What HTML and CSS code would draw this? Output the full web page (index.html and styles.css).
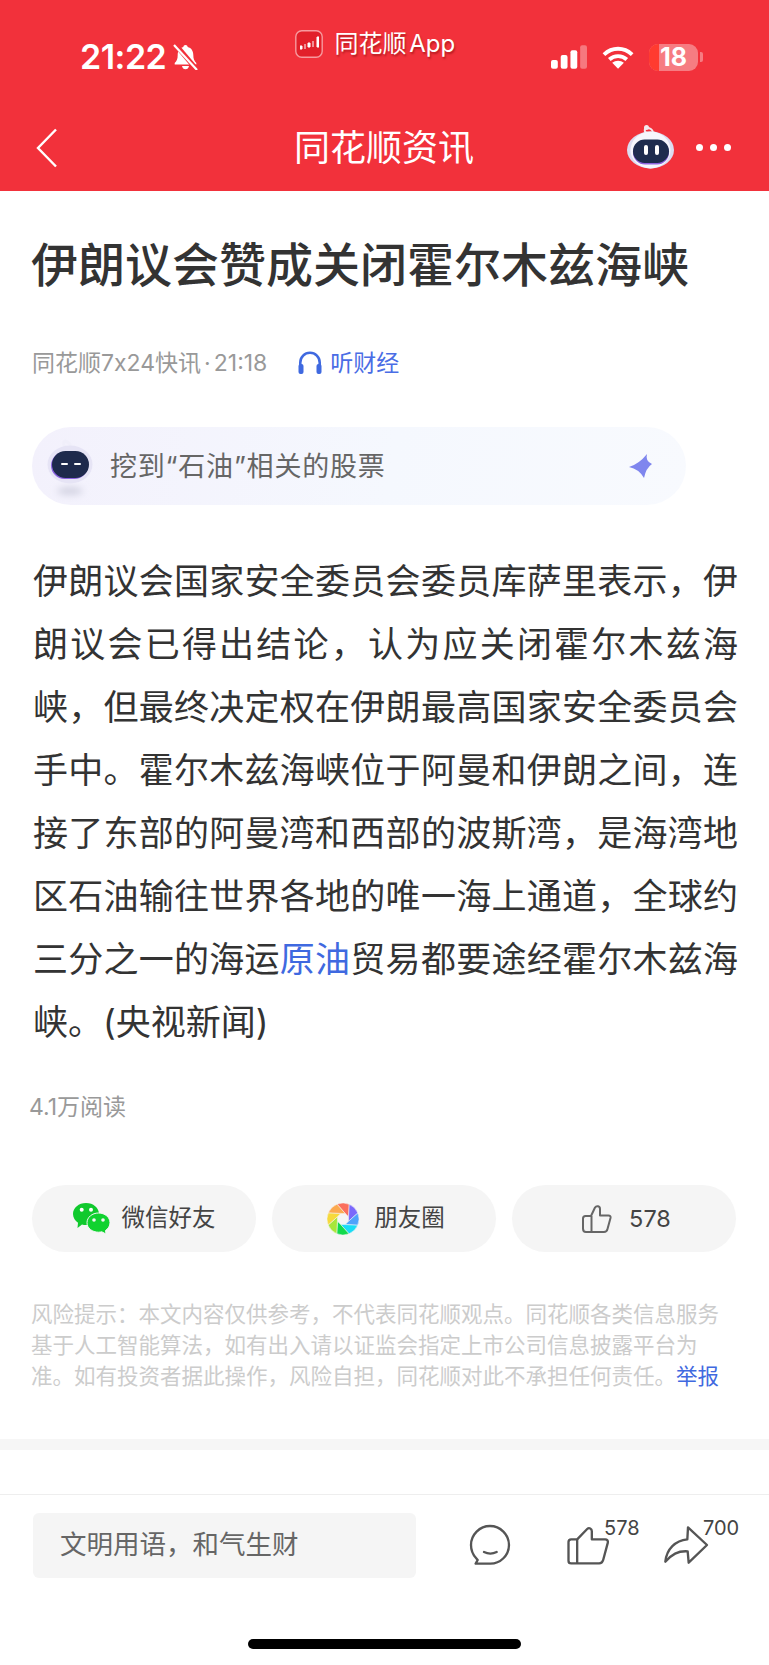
FILE: index.html
```html
<!DOCTYPE html>
<html lang="zh-CN">

<head>
    <meta charset="UTF-8">
    <meta name="viewport" content="width=device-width, initial-scale=1.0">
    <title>同花顺资讯</title>
    <link rel="stylesheet" href="styles.css">
</head>

<body>
    <header class="top">
        <!-- status bar -->
        <div class="status">
            <div class="status-left">
                <span class="clock">21:22</span>
                <svg class="bell" width="25" height="26" viewBox="0 0 25 26">
                    <path fill="#fff" d="M12.5 1c1.3 0 2 .8 2.2 2 3.6.9 5.6 4 5.6 8 0 4 1 6 3 8v1.500H1.700V19c2-2 3-4 3-8 0-4 2-7.100 5.600-8 .2-1.200.9-2 2.200-2zM9 22h7c-.3 2-1.700 3.300-3.500 3.300S9.300 24 9 22z"/>
                    <path stroke="#f2313b" stroke-width="5" d="M2 0l22 26"/>
                    <path stroke="#fff" stroke-width="2.200" d="M1 1l23 25"/>
                </svg>
            </div>
            <div class="status-app">
                <svg class="app-logo" width="28" height="28" viewBox="0 0 28 28">
                    <rect x=".8" y=".8" width="26.400" height="26.400" rx="6" fill="#e2202a" stroke="#f79a9e" stroke-width="1.400"/>
                    <path stroke="#fff" stroke-width="1" d="M6 15v5M10 14v5M14 12v6M18 11v6M23 6v12"/>
                    <path fill="#fff" d="M5 16h2.500v3H5zM12.500 13h3v4h-3zM21.500 7h2.500v10h-2.500z"/>
                </svg>
                <span>同花顺 App</span>
            </div>
            <div class="status-right">
                <svg width="37" height="24" viewBox="0 0 37 24">
                    <rect x="0" y="15" width="7" height="9" rx="2" fill="#fff"/>
                    <rect x="10" y="10" width="7" height="14" rx="2" fill="#fff"/>
                    <rect x="20" y="5" width="7" height="19" rx="2" fill="#fff"/>
                    <rect x="30" y="0" width="7" height="24" rx="2" fill="#fff" opacity=".35"/>
                </svg>
                <svg width="33" height="24" viewBox="0 0 33 24">
                    <path fill="none" stroke="#fff" stroke-width="4" d="M2 9.500c8.500-8 20.500-8 29 0M7.500 14.500c5-4.500 13-4.500 18 0"/>
                    <path fill="#fff" d="M16.500 24l-6-6c3.500-3 8.500-3 12 0z"/>
                </svg>
                <div class="battery"><span class="battery-low"></span><span class="battery-num">18</span></div>
            </div>
        </div>
        <!-- nav -->
        <nav class="nav">
            <svg class="nav-back" width="22" height="40" viewBox="0 0 22 40">
                <path fill="none" stroke="#fff" stroke-width="2.400" d="M20 1.500L2 20l18 18.500"/>
            </svg>
            <h2 class="nav-title">同花顺资讯</h2>
            <svg class="nav-robot" width="47" height="44" viewBox="0 0 47 44">
                <path fill="none" stroke="#f4e9ee" stroke-width="2" d="M20 8c-3-1-3-5 0-5 3 0 5 1 6 4"/>
                <circle cx="19.500" cy="2.500" r="2.500" fill="#f4e9ee"/>
                <ellipse cx="23.500" cy="25" rx="23.500" ry="18.500" fill="#dcdcf0"/>
                <ellipse cx="23.500" cy="25" rx="20" ry="18.500" fill="#f6f6fc"/>
                <rect x="6" y="15.500" width="36" height="24" rx="12" fill="#8d63dc"/>
                <rect x="6" y="14.500" width="36" height="23.500" rx="11.700" fill="#1e2c4e"/>
                <rect x="17" y="20" width="4" height="10" rx="2" fill="#fff"/>
                <rect x="28" y="20" width="4" height="10" rx="2" fill="#fff"/>
            </svg>
            <div class="nav-dots"><i></i><i></i><i></i></div>
        </nav>
    </header>

    <main class="article">
        <h1 class="headline">伊朗议会赞成关闭霍尔木兹海峡</h1>

        <div class="meta">
            <span>同花顺7x24快讯<span class="dot">·</span>21:18</span>
            <a class="listen">
                <svg width="24" height="24" viewBox="0 0 24 24">
                    <path fill="none" stroke="#3f69e0" stroke-width="2.600" d="M2.300 17v-5.500a9.700 9.700 0 0 1 19.400 0V17"/>
                    <rect x="0.500" y="13" width="5" height="10" rx="2" fill="#3f69e0"/>
                    <rect x="18.500" y="13" width="5" height="10" rx="2" fill="#3f69e0"/>
                </svg>
                听财经
            </a>
        </div>

        <div class="ask">
            <svg class="ask-robot" width="46" height="66" viewBox="0 0 46 66">
                <defs>
                    <filter id="soft" x="-50%" y="-150%" width="200%" height="400%"><feGaussianBlur stdDeviation="3.500"/></filter>
                </defs>
                <ellipse cx="23" cy="55" rx="13" ry="4" fill="#d3d3e2" filter="url(#soft)"/>
                <path fill="none" stroke="#f0effa" stroke-width="3" d="M19 12c-3-2-3-6-1-7 3 1 5 3 6 6"/>
                <ellipse cx="23" cy="28.500" rx="22.500" ry="19" fill="#e6e4f5"/>
                <rect x="4" y="16" width="37" height="27" rx="13.500" fill="#8a62df"/>
                <rect x="5" y="15" width="37" height="27" rx="13.500" fill="#1e2a4c"/>
                <rect x="14" y="27" width="7" height="2" rx="1" fill="#fff"/>
                <rect x="27" y="27" width="7" height="2" rx="1" fill="#fff"/>
            </svg>
            <span class="ask-text">挖到“石油”相关的股票</span>
            <svg class="ask-star" width="24" height="24" viewBox="0 0 24 24">
                <path fill="#7f86ee" d="M18 0Q16 7 23 10 17 14 15 24 10 15 0 13 10 10 18 0z"/>
            </svg>
        </div>

        <p class="content">伊朗议会国家安全委员会委员库萨里表示，伊朗议会已得出结论，认为应关闭霍尔木兹海峡，但最终决定权在伊朗最高国家安全委员会手中。霍尔木兹海峡位于阿曼和伊朗之间，连接了东部的阿曼湾和西部的波斯湾，是海湾地区石油输往世界各地的唯一海上通道，全球约三分之一的海运<a class="link">原油</a>贸易都要途经霍尔木兹海峡。(央视新闻)</p>

        <div class="views">4.1万阅读</div>

        <div class="share-row">
            <div class="share-btn">
                <svg width="37" height="31" viewBox="0 0 37 31">
                    <path fill="#10c92d" d="M13 0c7.200 0 13 4.900 13 11s-5.800 11-13 11c-1.400 0-2.800-.2-4-.6L4.500 25l.5-5.300C2 17.700 0 14.600 0 11 0 4.900 5.800 0 13 0z"/>
                    <circle cx="8.700" cy="6.700" r="2" fill="#fff"/>
                    <circle cx="18" cy="6.700" r="2" fill="#fff"/>
                    <path fill="#10d22f" stroke="#f5f5f5" stroke-width="1" d="M25.500 10C32 10 37 14.300 37 19.700c0 3.200-1.800 6-4.500 7.800l.5 3.500-4.200-2.200c-1 .2-2.200.4-3.300.4-6.300 0-11.500-4.100-11.500-9.500S19.200 10 25.500 10z"/>
                    <circle cx="21" cy="17" r="1.800" fill="#f5f5f5"/>
                    <circle cx="30" cy="17" r="1.800" fill="#f5f5f5"/>
                </svg>
                <span class="share-cn">微信好友</span>
            </div>
            <div class="share-btn moments">
                <svg width="32" height="32" viewBox="-16 -16 32 32">
                    <g transform="rotate(-22)" stroke="#f5f5f5" stroke-width=".5">
                        <path fill="#fb6f5d" d="M0-16A16 16 0 0 1 11.300-11.300L6 0 4.200-4.200z"/>
                        <path fill="#7a68fb" d="M11.300-11.300A16 16 0 0 1 16 0L4.200 4.200 6 0z"/>
                        <path fill="#4fa2fb" d="M16 0A16 16 0 0 1 11.300 11.300L0 6 4.200 4.200z"/>
                        <path fill="#19dcf5" d="M11.300 11.300A16 16 0 0 1 0 16L-4.200 4.200 0 6z"/>
                        <path fill="#12da4c" d="M0 16A16 16 0 0 1-11.300 11.300L-6 0-4.200 4.200z"/>
                        <path fill="#a8e63a" d="M-11.300 11.300A16 16 0 0 1-16 0L-4.200-4.200-6 0z"/>
                        <path fill="#f6d93c" d="M-16 0A16 16 0 0 1-11.300-11.300L0-6-4.200-4.200z"/>
                        <path fill="#fca94f" d="M-11.300-11.300A16 16 0 0 1 0-16L4.200-4.200 0-6z"/>
                    </g>
                </svg>
                <span class="share-cn">朋友圈</span>
            </div>
            <div class="share-btn likes">
                <svg width="30" height="28" viewBox="0 0 30 28">
                    <path fill="none" stroke="#666" stroke-width="2" stroke-linejoin="round" d="M9 11H3.500C2 11 1 12 1 13.500v10C1 25.500 2 27 4 27h18c2 0 3-1 3.500-3l3-11c.3-1.500-.5-2.500-2-2.500H18V4c0-3-3.500-3.800-5-1.500z"/>
                    <path fill="none" stroke="#666" stroke-width="2" d="M9.500 11v16"/>
                </svg>
                <span>578</span>
            </div>
        </div>

        <p class="risk">风险提示：本文内容仅供参考，不代表同花顺观点。同花顺各类信息服务基于人工智能算法，如有出入请以证监会指定上市公司信息披露平台为准。如有投资者据此操作，风险自担，同花顺对此不承担任何责任。<a class="link">举报</a></p>
    </main>

    <div class="divider"></div>

    <footer class="bottom">
        <div class="bottom-bar">
            <div class="comment-input">文明用语，和气生财</div>
            <svg class="icon-comment" width="42" height="42" viewBox="205 132 126 126">
                <path fill="none" stroke="#555" stroke-width="7" stroke-linejoin="round" d="M225 251h44c30 0 56-25 56-56 0-31-26-57-57-57s-57 26-57 57c0 15 5 28 15 39l5 6-6 11z"/>
                <path fill="none" stroke="#555" stroke-width="7" stroke-linecap="round" d="M250 216c12 6 26 6 38 0"/>
            </svg>
            <div class="count-icon like">
                <svg width="43" height="40" viewBox="500 135 128 120">
                    <path fill="none" stroke="#555" stroke-width="7" stroke-linejoin="round" d="M530 178h-18c-5 0-8 3-8 8v56c0 5 3 8 8 8h84c6 0 10-3 12-10l14-52c1-6-2-10-8-10h-40v-24c0-8-8-13-14-7z"/>
                    <path fill="none" stroke="#555" stroke-width="7" d="M530 178v72"/>
                </svg>
                <span>578</span>
            </div>
            <div class="count-icon forward">
                <svg width="46" height="40" viewBox="790 135 138 120">
                    <path fill="none" stroke="#555" stroke-width="7" stroke-linejoin="round" stroke-linecap="round" d="M797 245c4-38 30-64 66-67l2-36 57 53-55 53-3-34c-30-2-48 10-67 31z"/>
                </svg>
                <span>700</span>
            </div>
        </div>
        <div class="home-bar"></div>
    </footer>
</body>

</html>
```

FILE: styles.css
```css
* {
    margin: 0;
    padding: 0;
    box-sizing: border-box;
}

body {
    font-family: Inter, "Noto Sans CJK SC", sans-serif;
    background-color: #fff;
    color: #333;
    width: 769px;
    height: 1665px;
    display: flex;
    flex-direction: column;
    overflow: hidden;
}

/* header */
.top {
    background-color: #f2313b;
    color: #fff;
    height: 191px;
}

.status {
    height: 104px;
    padding: 10px 66px 0 80px;
    display: flex;
    justify-content: space-between;
    align-items: center;
}

.status-left {
    display: flex;
    align-items: center;
    gap: 7px;
    width: 118px;
}

.clock {
    font-size: 34px;
    font-weight: 600;
    line-height: 36px;
    letter-spacing: -0.5px;
}

.bell {
    flex-shrink: 0;
}

.status-app {
    display: flex;
    align-items: center;
    gap: 12px;
    width: 160px;
    margin-top: -26px;
    font-size: 24px;
    line-height: 30px;
    word-spacing: -4px;
    white-space: nowrap;
    text-shadow: 1px 2px 2px rgba(110, 0, 0, 0.45);
}

.app-logo {
    flex-shrink: 0;
}

.status-right {
    display: flex;
    align-items: center;
    gap: 15px;
    width: 152px;
}

.status-right::after {
    content: "";
    width: 3px;
    height: 10px;
    margin-left: -13px;
    border-radius: 0 2px 2px 0;
    background-color: #f67c82;
}

.battery {
    position: relative;
    width: 49px;
    height: 27px;
    border-radius: 9px;
    background-color: #f67c82;
    text-align: center;
    flex-shrink: 0;
}

.battery-low {
    position: absolute;
    left: 0;
    top: 0;
    bottom: 0;
    width: 10px;
    border-radius: 9px 0 0 9px;
    background-color: #ff3b30;
}

.battery-num {
    position: relative;
    font-size: 25px;
    font-weight: 700;
    line-height: 27px;
    display: block;
}

.nav {
    height: 87px;
    padding: 0 37px 0 36px;
    display: flex;
    align-items: center;
}

.nav-back {
    flex-shrink: 0;
}

.nav-title {
    font-size: 36px;
    font-weight: 400;
    line-height: 46px;
    margin-left: 236px;
    width: 181px;
    white-space: nowrap;
}

.nav-robot {
    margin-left: 152px;
    margin-top: -2px;
    flex-shrink: 0;
}

.nav-dots {
    display: flex;
    gap: 7px;
    margin-left: 22px;
}

.nav-dots i {
    width: 7px;
    height: 7px;
    border-radius: 50%;
    background-color: #fff;
}

/* article */
.article {
    padding: 44px 32px 0;
}

.headline {
    font-size: 47px;
    font-weight: 500;
    line-height: 60px;
    white-space: nowrap;
    margin-left: -1px;
}

.meta {
    margin-top: 53px;
    display: flex;
    align-items: center;
    gap: 31px;
    font-size: 23px;
    line-height: 30px;
    color: #999;
}

.dot {
    margin: 0 3px;
}

.listen {
    display: flex;
    align-items: center;
    gap: 8px;
    color: #4a6de5;
}

.ask {
    margin-top: 49px;
    width: 654px;
    height: 78px;
    border-radius: 39px;
    background: linear-gradient(100deg, #f3f1fc 0%, #f5f8fe 55%, #f8fafe 100%);
    display: flex;
    align-items: center;
    padding: 0 33px 0 15px;
    font-size: 27px;
    color: #666;
}

.ask-robot {
    margin-top: 6px;
    flex-shrink: 0;
}

.ask-text {
    margin: 0 0 4px 17px;
    flex: 1;
    letter-spacing: 0.8px;
}

.content {
    margin: 45px -1px 0 1px;
    font-size: 35px;
    line-height: 63px;
    text-align: justify;
    color: #333;
}

.link {
    color: #3f69e0;
}

.views {
    margin: 38px 0 0 -3px;
    font-size: 23px;
    line-height: 30px;
    color: #999;
}

.share-row {
    margin-top: 63px;
    width: 704px;
    display: grid;
    grid-template-columns: repeat(3, 1fr);
    gap: 16px;
}

.share-btn {
    height: 67px;
    border-radius: 34px;
    background-color: #f5f5f5;
    display: flex;
    align-items: center;
    justify-content: center;
    gap: 12px;
    font-size: 23.500px;
    color: #444;
}

.share-cn {
    margin-bottom: 5px;
}

.moments {
    gap: 15px;
    padding-left: 4px;
}

.likes {
    gap: 17px;
    padding-left: 5px;
}

.risk {
    margin: 47px -2px 0 -1px;
    font-size: 21.500px;
    line-height: 31px;
    color: #ccc;
}

.divider {
    margin-top: 47px;
    height: 11px;
    background-color: #f6f6f6;
    flex-shrink: 0;
}

/* bottom bar */
.bottom {
    margin-top: auto;
    border-top: 1px solid #eee;
    height: 171px;
}

.bottom-bar {
    display: flex;
    align-items: center;
    padding: 17px 0 0 33px;
    height: 83px;
}

.comment-input {
    width: 383px;
    height: 65px;
    border-radius: 6px;
    background-color: #f5f5f5;
    font-size: 26.500px;
    line-height: 63px;
    padding-left: 27px;
    color: #666;
}

.icon-comment {
    margin-left: 53px;
}

.count-icon {
    position: relative;
}

.count-icon svg {
    display: block;
}

.count-icon span {
    position: absolute;
    top: -9px;
    font-size: 20px;
    line-height: 24px;
    color: #444;
}

.like {
    margin-left: 56px;
}

.like span {
    left: 37px;
}

.forward {
    margin-left: 53px;
}

.forward span {
    left: 40px;
}

.home-bar {
    width: 273px;
    height: 10px;
    border-radius: 5px;
    background-color: #000;
    margin: 61px auto 0;
}
```
